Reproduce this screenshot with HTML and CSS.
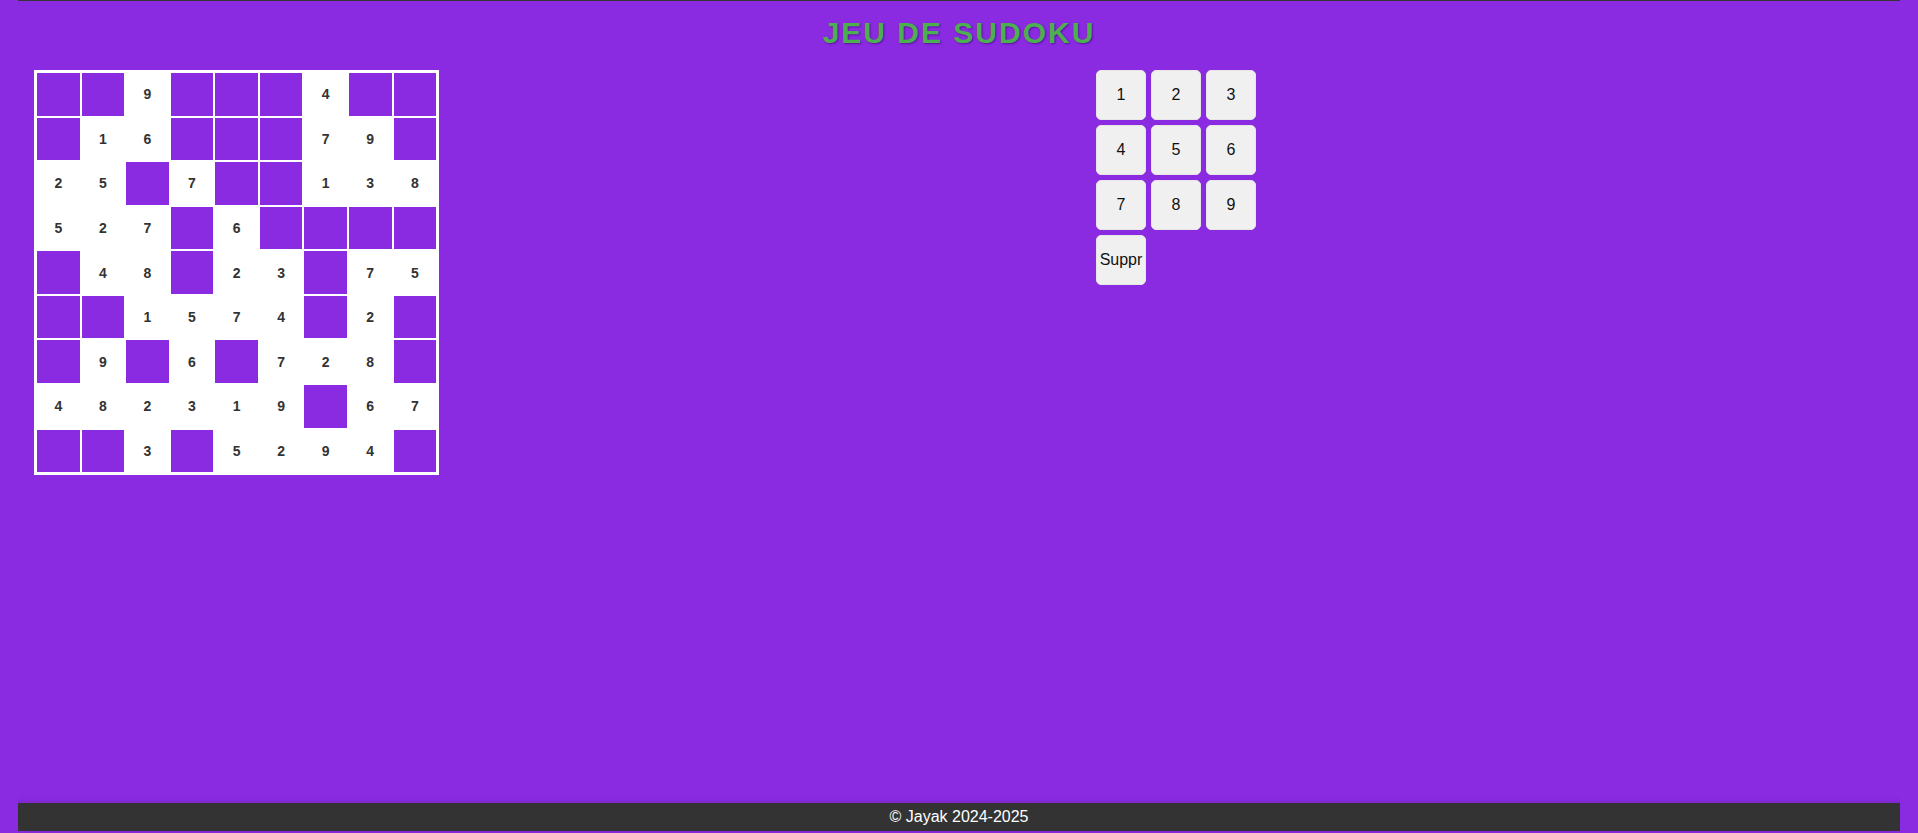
FILE: index.html
```html
<!DOCTYPE html>
<html lang="fr">
<head>
<meta charset="utf-8">
<title>Jeu de Sudoku</title>
<link rel="stylesheet" href="styles.css">
</head>
<body>
<div class="topbar"></div>
<h1 class="title">JEU DE SUDOKU</h1>
<main class="game">
  <div class="board">
    <div class="cell empty"></div><div class="cell empty"></div><div class="cell">9</div><div class="cell empty"></div><div class="cell empty"></div><div class="cell empty"></div><div class="cell">4</div><div class="cell empty"></div><div class="cell empty"></div>
    <div class="cell empty"></div><div class="cell">1</div><div class="cell">6</div><div class="cell empty"></div><div class="cell empty"></div><div class="cell empty"></div><div class="cell">7</div><div class="cell">9</div><div class="cell empty"></div>
    <div class="cell">2</div><div class="cell">5</div><div class="cell empty"></div><div class="cell">7</div><div class="cell empty"></div><div class="cell empty"></div><div class="cell">1</div><div class="cell">3</div><div class="cell">8</div>
    <div class="cell">5</div><div class="cell">2</div><div class="cell">7</div><div class="cell empty"></div><div class="cell">6</div><div class="cell empty"></div><div class="cell empty"></div><div class="cell empty"></div><div class="cell empty"></div>
    <div class="cell empty"></div><div class="cell">4</div><div class="cell">8</div><div class="cell empty"></div><div class="cell">2</div><div class="cell">3</div><div class="cell empty"></div><div class="cell">7</div><div class="cell">5</div>
    <div class="cell empty"></div><div class="cell empty"></div><div class="cell">1</div><div class="cell">5</div><div class="cell">7</div><div class="cell">4</div><div class="cell empty"></div><div class="cell">2</div><div class="cell empty"></div>
    <div class="cell empty"></div><div class="cell">9</div><div class="cell empty"></div><div class="cell">6</div><div class="cell empty"></div><div class="cell">7</div><div class="cell">2</div><div class="cell">8</div><div class="cell empty"></div>
    <div class="cell">4</div><div class="cell">8</div><div class="cell">2</div><div class="cell">3</div><div class="cell">1</div><div class="cell">9</div><div class="cell empty"></div><div class="cell">6</div><div class="cell">7</div>
    <div class="cell empty"></div><div class="cell empty"></div><div class="cell">3</div><div class="cell empty"></div><div class="cell">5</div><div class="cell">2</div><div class="cell">9</div><div class="cell">4</div><div class="cell empty"></div>
  </div>
  <div class="keypad">
    <button class="key">1</button><button class="key">2</button><button class="key">3</button>
    <button class="key">4</button><button class="key">5</button><button class="key">6</button>
    <button class="key">7</button><button class="key">8</button><button class="key">9</button>
    <button class="key">Suppr</button>
  </div>
</main>
<footer class="footer">© Jayak 2024-2025</footer>
</body>
</html>
```
FILE: styles.css
```css
* { box-sizing: border-box; }
html, body { height: 100%; }
body {
  margin: 0 18px;
  background: #8a2be2;
  font-family: "Liberation Sans", Arial, sans-serif;
  display: flex;
  flex-direction: column;
  min-height: 100vh;
}
.topbar {
  height: 1px;
  background: #353535;
  flex: none;
}
.title {
  margin: 14px 0 20px;
  line-height: 35px;
  font-size: 30px;
  font-weight: bold;
  letter-spacing: 2px;
  text-align: center;
  color: #4caf50;
  text-shadow: 1px 1px 2px rgba(60, 0, 110, 0.6);
  flex: none;
}
.game {
  flex: 1;
  display: flex;
  align-items: flex-start;
  gap: 657px;
  padding-left: 16px;
}
.board {
  width: 405px;
  padding: 3px;
  background: #fff;
  display: grid;
  grid-template-columns: repeat(9, 1fr);
  gap: 2px;
}
.cell {
  aspect-ratio: 1 / 1;
  display: flex;
  align-items: center;
  justify-content: center;
  font-size: 14px;
  font-weight: bold;
  color: #333;
  background: #fff;
}
.cell.empty { background: #8a2be2; }
.keypad {
  display: grid;
  grid-template-columns: repeat(3, 50px);
  gap: 5px;
}
.key {
  width: 50px;
  height: 50px;
  padding: 0;
  border: 1px solid #e6e6e6;
  border-radius: 5px;
  background: #f0f0f0;
  color: #111;
  font-family: "Liberation Sans", Arial, sans-serif;
  font-size: 16px;
}
.footer {
  flex: none;
  height: 28px;
  margin-bottom: 2px;
  background: #333;
  color: #fff;
  font-size: 16px;
  line-height: 28px;
  text-align: center;
  box-shadow: 0 -1px 6px rgba(0, 0, 0, 0.15);
}
```
